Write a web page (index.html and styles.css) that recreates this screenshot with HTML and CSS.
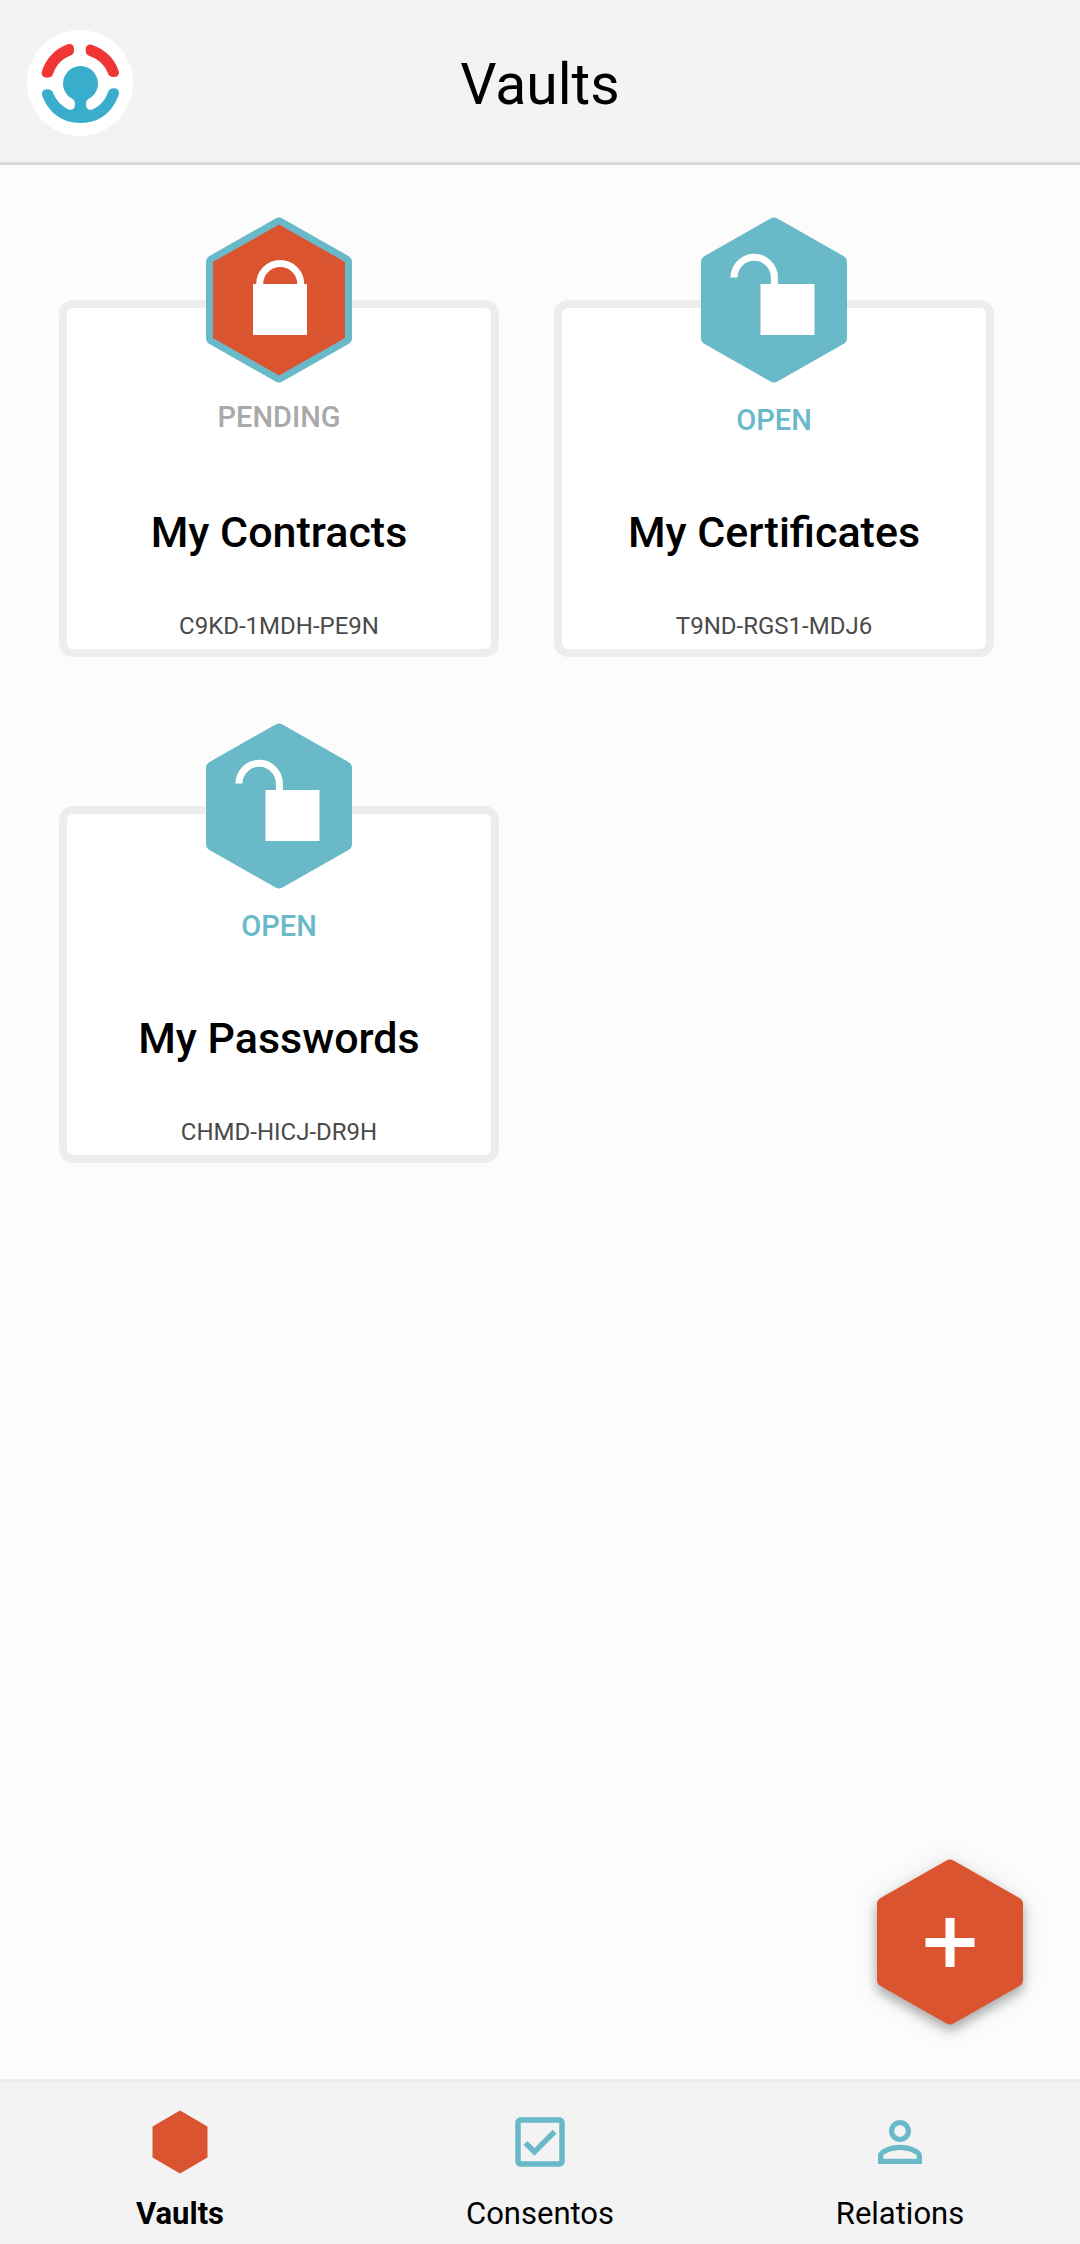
FILE: index.html
```html
<!DOCTYPE html>
<html lang="en">
<head>
  <meta charset="utf-8">
  <meta name="viewport" content="width=device-width, initial-scale=1">
  <title>Vaults</title>
  <link rel="stylesheet" href="styles.css">
</head>
<body>
  <svg class="sprite" aria-hidden="true">
    <symbol id="hexagon" viewBox="0 0 146 166">
      <path d="M73 7.500 139 45V121L73 158.500 7 121V45Z" stroke-width="14" stroke-linejoin="round"/>
    </symbol>
    <symbol id="lock-open" viewBox="0 0 146 166">
      <path d="M59.500 67h54v51h-54z" fill="#fff"/>
      <path d="M33 60.500a20.200 20.200 0 0 1 40.400 0V68" fill="none" stroke="#fff" stroke-width="7"/>
    </symbol>
    <symbol id="lock-closed" viewBox="0 0 146 166">
      <path d="M47 67h54v51H47z" fill="#fff"/>
      <path d="M53.700 68v-1a20.500 20.500 0 0 1 41 0v1" fill="none" stroke="#fff" stroke-width="7"/>
    </symbol>
  </svg>

  <header class="header">
    <a class="logo" href="#" aria-label="Home">
      <svg viewBox="81 90 318 318" aria-hidden="true">
        <circle cx="240" cy="249" r="159" fill="#fff"/>
        <g fill="#f03537">
          <path d="M125 217C135 180 165 145 205 132Q222 130 222 148V152Q222 162 211 167C185 176 168 196 160 220Q157 233 142 233Q124 233 125 217Z"/>
          <path d="M357 216C347 180 317 147 275 134Q257 132 257 149V153Q257 163 268 168C295 177 313 194 323 218Q327 231 341 231Q358 231 357 216Z"/>
        </g>
        <path fill="#38aecc" d="M126 286Q124 268 142 268Q156 268 160 280C169 303 185 318 206 329Q225 332 225 312Q225 302 219 298A52.500 52.500 0 1 1 264 298Q258 302 258 312Q258 332 276 329C298 318 315 303 323 279Q327 265 341 265Q358 265 357 282C338 336 300 369 241 369C183 369 145 336 126 286Z"/>
      </svg>
    </a>
    <h1 class="title">Vaults</h1>
  </header>

  <main class="main">
    <ul class="vaults">
      <li class="vault">
        <svg class="badge" viewBox="0 0 146 166" aria-hidden="true">
          <use class="hex-pending" href="#hexagon"/>
          <path class="hex-core" d="M73 7.500 139 45V121L73 158.500 7 121V45Z"/>
          <use href="#lock-closed"/>
        </svg>
        <p class="status status-pending">PENDING</p>
        <h2 class="name">My Contracts</h2>
        <p class="code">C9KD-1MDH-PE9N</p>
      </li>
      <li class="vault">
        <svg class="badge" viewBox="0 0 146 166" aria-hidden="true">
          <use class="hex-open" href="#hexagon"/>
          <use href="#lock-open"/>
        </svg>
        <p class="status status-open">OPEN</p>
        <h2 class="name">My Certificates</h2>
        <p class="code">T9ND-RGS1-MDJ6</p>
      </li>
      <li class="vault">
        <svg class="badge" viewBox="0 0 146 166" aria-hidden="true">
          <use class="hex-open" href="#hexagon"/>
          <use href="#lock-open"/>
        </svg>
        <p class="status status-open">OPEN</p>
        <h2 class="name">My Passwords</h2>
        <p class="code">CHMD-HICJ-DR9H</p>
      </li>
    </ul>
  </main>

  <button class="add" type="button" aria-label="Add vault">
    <svg viewBox="0 0 146 166" aria-hidden="true">
      <use class="hex-action" href="#hexagon"/>
      <path d="M73 59v49M48.500 83.500h49" stroke="#fff" stroke-width="9"/>
    </svg>
  </button>

  <nav class="tabs">
    <a class="tab tab-active" href="#vaults" aria-current="page">
      <svg viewBox="0 0 66 66" aria-hidden="true">
        <path d="M33 2.500 59.500 18V48L33 63.500 6.500 48V18Z" fill="#da5430" stroke="#da5430" stroke-width="2" stroke-linejoin="round"/>
      </svg>
      <span>Vaults</span>
    </a>
    <a class="tab" href="#consentos">
      <svg viewBox="0 0 24 24" aria-hidden="true">
        <path fill="#69b9c9" d="M19 3H5c-1.100 0-2 .9-2 2v14c0 1.100.9 2 2 2h14c1.100 0 2-.9 2-2V5c0-1.100-.9-2-2-2zm0 16H5V5h14v14zM17.990 9l-1.410-1.420-6.590 6.590-2.580-2.570-1.420 1.410 4 3.990z"/>
      </svg>
      <span>Consentos</span>
    </a>
    <a class="tab" href="#relations">
      <svg viewBox="0 0 24 24" aria-hidden="true">
        <path fill="#69b9c9" d="M12 5.900c1.160 0 2.100.94 2.100 2.100s-.94 2.100-2.100 2.100S9.900 9.160 9.900 8s.94-2.100 2.100-2.100m0 9c2.970 0 6.100 1.460 6.100 2.100v1.100H5.900V17c0-.64 3.130-2.100 6.100-2.100M12 4C9.790 4 8 5.790 8 8s1.790 4 4 4 4-1.790 4-4-1.790-4-4-4zm0 9c-2.670 0-8 1.340-8 4v3h16v-3c0-2.660-5.330-4-8-4z"/>
      </svg>
      <span>Relations</span>
    </a>
  </nav>
</body>
</html>
```
FILE: styles.css
```css
* {
  box-sizing: border-box;
}

body {
  margin: 0;
  min-height: 100vh;
  display: flex;
  flex-direction: column;
  background: #fcfcfc;
  color: #000;
  font-family: Roboto, "Liberation Sans", sans-serif;
}

h1,
h2,
p,
ul {
  margin: 0;
  padding: 0;
}

svg {
  display: block;
}

.sprite {
  position: absolute;
  width: 0;
  height: 0;
}

/* Header */
.header {
  display: grid;
  grid-template-columns: 1fr auto 1fr;
  align-items: center;
  padding: 30px 27px 26px;
  background: #f3f3f3;
  border-bottom: 3px solid #d8d8d8;
}

.logo {
  justify-self: start;
}

.logo svg {
  width: 106px;
  height: 106px;
}

.title {
  padding-top: 4px;
  font-size: 57px;
  line-height: 68px;
  font-weight: 400;
}

/* Vault cards */
.main {
  flex: 1;
  padding: 135px 86px 60px 59px;
}

.vaults {
  display: grid;
  grid-template-columns: 1fr 1fr;
  gap: 149px 55px;
  list-style: none;
}

.vault {
  display: flex;
  flex-direction: column;
  align-items: center;
  padding-bottom: 9px;
  background: #fff;
  border: 8px solid #ededed;
  border-radius: 14px;
  text-align: center;
}

.badge {
  width: 146px;
  height: 166px;
  margin-top: -91px;
}

.hex-open,
.hex-pending {
  fill: #69b9c9;
  stroke: #69b9c9;
}

.hex-core {
  fill: #da5430;
}

.hex-action {
  fill: #da5430;
  stroke: #da5430;
}

.status {
  min-height: 123px;
  font-size: 29px;
  line-height: 36px;
  font-weight: 500;
}

.status-pending {
  padding-top: 16px;
  color: #aaa9a9;
}

.status-open {
  padding-top: 19px;
  color: #69b9c9;
}

.name {
  font-size: 43px;
  line-height: 52px;
  font-weight: 500;
}

.code {
  margin-top: 54px;
  color: #4a4a4a;
  font-size: 24px;
  line-height: 28px;
}

/* Floating action button */
.add {
  position: fixed;
  right: 57px;
  bottom: 219px;
  padding: 0;
  border: 0;
  background: none;
  cursor: pointer;
}

.add svg {
  width: 146px;
  height: 166px;
  overflow: visible;
  filter: drop-shadow(0 6px 6px rgba(0, 0, 0, 0.3)) drop-shadow(0 0 12px rgba(0, 0, 0, 0.08));
}

/* Bottom tabs */
.tabs {
  position: sticky;
  bottom: 0;
  display: grid;
  grid-template-columns: repeat(3, 1fr);
  background: #f3f3f3;
  border-top: 3px solid #ededed;
}

.tab {
  display: flex;
  flex-direction: column;
  align-items: center;
  gap: 21px;
  padding: 27px 0 12px;
  color: #000;
  font-size: 31px;
  line-height: 36px;
  text-decoration: none;
}

.tab svg {
  width: 66px;
  height: 66px;
}

.tab-active {
  font-weight: 700;
}
```
